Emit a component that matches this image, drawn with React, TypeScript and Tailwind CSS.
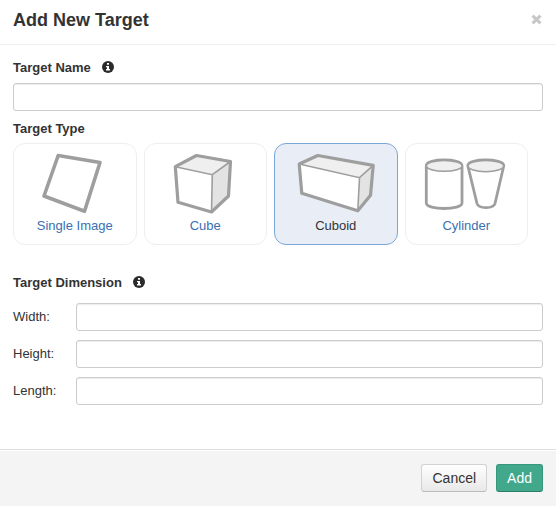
import { useState } from "react";
import type { ReactNode } from "react";

const inputClass =
  "block h-7 w-full min-w-0 rounded-[3px] border border-[#cccccc] bg-white px-2 text-[13px] shadow-[inset_0_1px_1px_rgba(0,0,0,0.075)] outline-none focus:border-[#7aa7d6]";

function InfoIcon() {
  return (
    <svg viewBox="0 0 12 12" className="mb-0.5 size-3 shrink-0" aria-hidden="true">
      <circle cx="6" cy="6" r="6" fill="#2b2b2b" />
      <path d="M5 2h2v1.7H5zM4 5h3v3h1v1.4H4V8h1V6.2H4z" fill="#fff" />
    </svg>
  );
}

function Box({ outer, top, side, inner }: { outer: string; top: string; side: string; inner: string }) {
  return (
    <>
      <polygon points={outer} fill="#fff" />
      <polygon points={top} fill="#efefef" />
      <polygon points={side} fill="#e3e3e3" />
      <path d={inner} fill="none" stroke="#9e9e9e" strokeWidth="1.6" />
      <polygon points={outer} fill="none" stroke="#9e9e9e" strokeWidth="3.2" strokeLinejoin="round" />
    </>
  );
}

const types: { name: string; drawing: ReactNode }[] = [
  {
    name: "Single Image",
    drawing: (
      <polygon
        points="33.2,2.5 75,9.5 59.5,58.3 19,43"
        fill="#fff"
        stroke="#9e9e9e"
        strokeWidth="3.6"
        strokeLinejoin="round"
      />
    ),
  },
  {
    name: "Cube",
    drawing: (
      <Box
        outer="41.5,2.5 75.5,8.5 73.5,43 56.5,59 23,49.3 20.3,13.7"
        top="41.5,2.5 75.5,8.5 57.3,21.7 20.3,13.7"
        side="75.5,8.5 73.5,43 56.5,59 57.3,21.7"
        inner="M20.3 13.7 57.3 21.7 75.5 8.5M57.3 21.7 56.5 59"
      />
    ),
  },
  {
    name: "Cuboid",
    drawing: (
      <Box
        outer="31.8,2.5 87.2,12.3 84.5,42.3 71.8,57.7 15.8,40.3 13.2,11"
        top="31.8,2.5 87.2,12.3 73.5,24.7 13.2,11"
        side="87.2,12.3 84.5,42.3 71.8,57.7 73.5,24.7"
        inner="M13.2 11 73.5 24.7 87.2 12.3M73.5 24.7 71.8 57.7"
      />
    ),
  },
  {
    name: "Cylinder",
    drawing: (
      <g stroke="#9e9e9e">
        <path d="M10.3 12.7C10.3 5 46 5 46 12.7V50C46 57.3 10.3 57.3 10.3 50Z" fill="#fff" strokeWidth="2.8" />
        <ellipse cx="28.2" cy="12.9" rx="17.8" ry="5.4" fill="#efefef" strokeWidth="1.5" />
        <path
          d="M51.8 12.7C51.8 5 87.8 5 87.8 12.7L79 50.5C77.5 56 62.5 56 61 50.5Z"
          fill="#fff"
          strokeWidth="2.8"
        />
        <ellipse cx="69.8" cy="13.1" rx="17.8" ry="5.6" fill="#efefef" strokeWidth="1.5" />
      </g>
    ),
  },
];

export default function App() {
  const [selected, setSelected] = useState("Cuboid");

  return (
    <form
      className="w-full bg-white font-['Liberation_Sans',Arial,sans-serif] text-[13px] leading-5 text-[#333333]"
      onSubmit={(e) => e.preventDefault()}
    >
      <header className="flex h-[45px] items-center justify-between border-b border-[#eeeeee] px-[13px] pb-1">
        <h1 className="text-lg font-bold">Add New Target</h1>
        <button type="button" aria-label="Close" className="px-px pt-0 pb-0.5">
          <svg viewBox="0 0 10 10" className="size-[11px]" aria-hidden="true">
            <path d="M1.4 1.4 8.6 8.6M8.6 1.4 1.4 8.6" stroke="#c8c8c8" strokeWidth="2.8" />
          </svg>
        </button>
      </header>

      <main className="px-[13px] pt-[13px] pb-11">
        <div className="flex items-center gap-[11px] pb-[5px]">
          <label htmlFor="target-name" className="font-bold">
            Target Name
          </label>
          <InfoIcon />
        </div>
        <input id="target-name" type="text" className={inputClass} />

        <h2 id="target-type" className="pt-2 pb-1 font-bold">
          Target Type
        </h2>
        <div role="group" aria-labelledby="target-type" className="mr-[15px] grid grid-cols-4 gap-[7px]">
          {types.map(({ name, drawing }) => (
            <button
              key={name}
              type="button"
              aria-pressed={selected === name}
              onClick={() => setSelected(name)}
              className={
                selected === name
                  ? "flex flex-col items-center rounded-xl border border-[#7aa7d6] bg-[#e9eef6] pt-[9px] pb-2 text-[#333333]"
                  : "flex flex-col items-center rounded-xl border border-[#eeeeee] bg-white pt-[9px] pb-2 text-[#3a70b2]"
              }
            >
              <svg viewBox="0 0 100 63" className="h-[63px] w-[100px]" aria-hidden="true">
                {drawing}
              </svg>
              <span>{name}</span>
            </button>
          ))}
        </div>

        <h2 className="flex items-center gap-[11px] pt-7 pb-[10px] font-bold">
          Target Dimension
          <InfoIcon />
        </h2>
        <div className="grid grid-cols-[63px_1fr] items-center gap-y-[9px]">
          <label htmlFor="width">Width:</label>
          <input id="width" type="text" className={inputClass} />
          <label htmlFor="height">Height:</label>
          <input id="height" type="text" className={inputClass} />
          <label htmlFor="length">Length:</label>
          <input id="length" type="text" className={inputClass} />
        </div>
      </main>

      <footer className="flex justify-end gap-[9px] border-t border-[#dddddd] bg-[#f4f4f4] px-[13px] py-[14px] text-sm shadow-[inset_0_1px_0_#ffffff]">
        <button
          type="button"
          className="h-7 rounded-[3px] border border-[#d2d2d2] border-b-[#bbbbbb] bg-linear-to-b from-white to-[#e8e8e8] px-[10px]"
        >
          Cancel
        </button>
        <button
          type="submit"
          className="h-7 rounded-[3px] border border-[#37977a] border-b-[#2c7f66] bg-[#42a88c] px-[10px] text-white"
        >
          Add
        </button>
      </footer>
    </form>
  );
}
